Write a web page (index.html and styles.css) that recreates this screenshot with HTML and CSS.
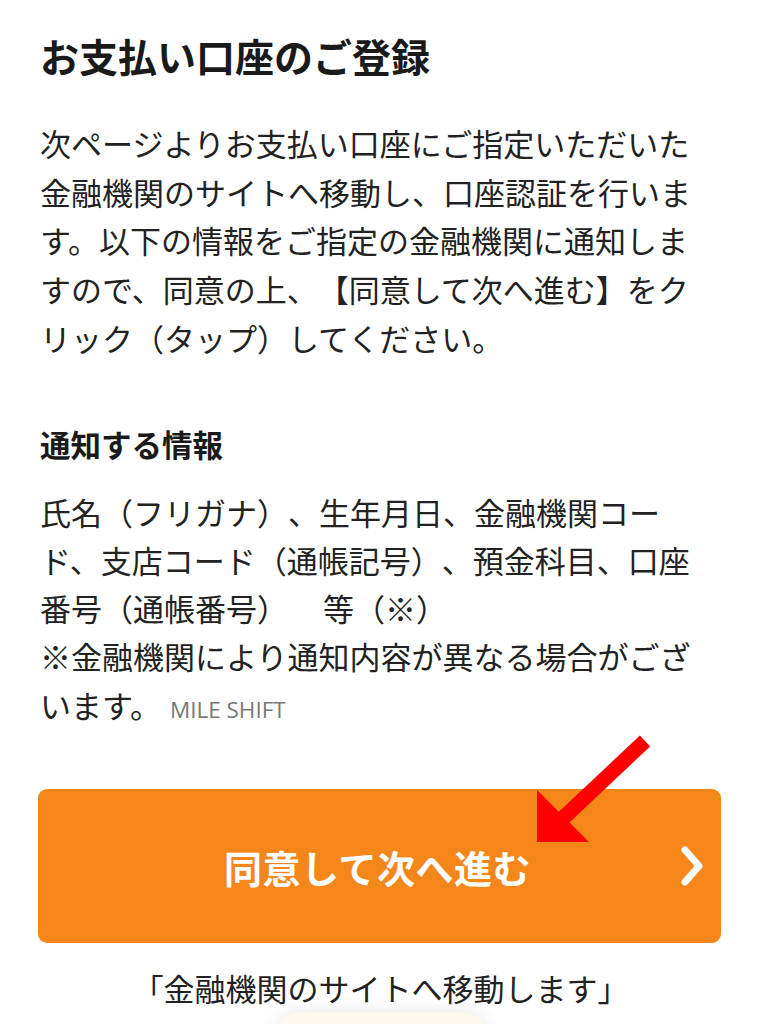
FILE: index.html
```html
<!DOCTYPE html>
<html lang="ja">
<head>
  <meta charset="UTF-8" />
  <meta name="viewport" content="width=device-width, initial-scale=1" />
  <title>お支払い口座のご登録</title>
  <link rel="stylesheet" href="styles.css">
</head>
<body>
<div class="page">
  <h1 class="title">お支払い口座のご登録</h1>
  <p class="lead">
    次ページよりお支払い口座にご指定いただいた<br>
    金融機関のサイトへ移動し、口座認証を行いま<br>
    す。以下の情報をご指定の金融機関に通知しま<br>
    すので、同意の上、【同意して次へ進む】をク<br>
    リック（タップ）してください。
  </p>

  <h2 class="sub-title">通知する情報</h2>
  <p class="info">
    氏名（フリガナ）、生年月日、金融機関コー<br>
    ド、支店コード（通帳記号）、預金科目、口座<br>
    番号（通帳番号）<span class="gap"></span>等（※）<br>
    ※金融機関により通知内容が異なる場合がござ<br>
    います。<span class="mark">MILE SHIFT</span>
  </p>

  <div class="btn-wrap">
    <a class="next-btn" href="#">
      <span></span>
      <span class="next-label">同意して次へ進む</span>
      <svg class="chevron" width="24" height="40" viewBox="0 0 24 40">
        <polyline points="5,4 19,20 5,36" fill="none" stroke="#fff" stroke-width="7" stroke-linecap="round" stroke-linejoin="round" />
      </svg>
    </a>
    <svg class="pointer" width="120" height="115" viewBox="530 735 120 115">
      <line x1="645" y1="742" x2="560" y2="822" stroke="#ff0000" stroke-width="15" />
      <polygon points="537,791 537,843 589,843" fill="#ff0000" />
    </svg>
  </div>

  <p class="caption">「金融機関のサイトへ移動します」</p>
  <div class="pill"></div>
</div>
</body>
</html>
```

FILE: styles.css
```css
* { box-sizing: border-box; }
html, body {
  margin: 0;
  background: #ffffff;
}
body {
  font-family: "Noto Sans CJK JP", "Noto Sans", sans-serif;
  color: #222;
  overflow: hidden;
  text-spacing-trim: space-all;
}
.page {
  padding: 0 38px 0 40px;
}
.title {
  margin: 27px 0 0;
  font-size: 39px;
  line-height: 56px;
  font-weight: 700;
  color: #1a1a1a;
}
.lead {
  margin: 36px 0 0;
  font-size: 31px;
  line-height: 48.7px;
  white-space: nowrap;
}
.sub-title {
  margin: 59px 0 0;
  font-size: 30.5px;
  line-height: 44px;
  font-weight: 700;
  color: #1a1a1a;
}
.info {
  margin: 22px 0 0;
  font-size: 31px;
  line-height: 48.3px;
  white-space: nowrap;
}
.gap {
  display: inline-block;
  width: 35px;
}
.mark {
  margin-left: 9px;
  font-family: "Open Sans", "Liberation Sans", sans-serif;
  font-size: 22.5px;
  color: #777;
}
.btn-wrap {
  position: relative;
  margin: 55px 0 0 -2px;
}
.next-btn {
  display: grid;
  grid-template-columns: 1fr auto 1fr;
  align-items: center;
  height: 154px;
  padding: 0 17px;
  background: #f5861a;
  border-radius: 9px;
  text-decoration: none;
}
.next-label {
  font-size: 38px;
  font-weight: 700;
  color: #fff;
  letter-spacing: 0.5px;
  margin-right: 4px;
}
.chevron {
  justify-self: end;
}
.pointer {
  position: absolute;
  left: 492px;
  top: -55px;
}
.caption {
  margin: 22px 0 0;
  font-size: 31px;
  line-height: 46px;
  text-align: center;
  color: #222;
}
.pill {
  width: 212px;
  height: 50px;
  margin: 1px auto 0;
  border-radius: 25px;
  background: #fdf7ee;
  box-shadow: 0 0 18px rgba(0, 0, 0, 0.1);
}
```
